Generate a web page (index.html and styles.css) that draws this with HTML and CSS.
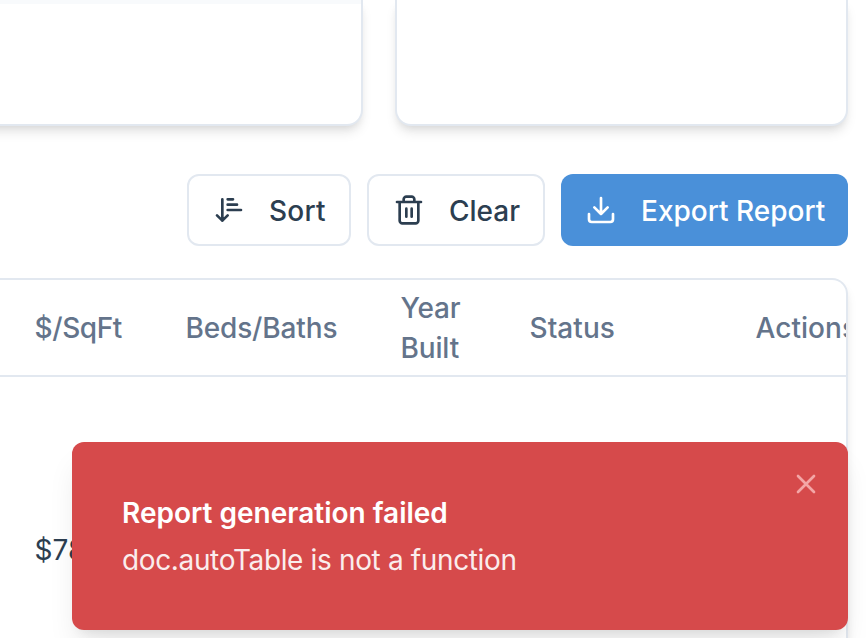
FILE: index.html
```
<!DOCTYPE html>
<html lang="en">
<head>
<meta charset="utf-8">
<title>Report</title>
<link rel="stylesheet" href="styles.css">
</head>
<body>
<main class="page">
  <section class="cards">
    <div class="card card-left"><div class="card-band"></div></div>
    <div class="card card-right"></div>
  </section>
  <div class="toolbar">
    <button class="btn sort">
      <svg class="icon" viewBox="0 0 24 24"><path d="m3 16 4 4 4-4M7 20V4M11 4h4M11 8h7M11 12h10"/></svg>
      <span>Sort</span>
    </button>
    <button class="btn clear">
      <svg class="icon" viewBox="0 0 24 24"><path d="M3 6h18M19 6v14c0 1-1 2-2 2H7c-1 0-2-1-2-2V6M8 6V4c0-1 1-2 2-2h4c1 0 2 1 2 2v2M10 11v6M14 11v6"/></svg>
      <span>Clear</span>
    </button>
    <button class="btn primary">
      <svg class="icon" viewBox="0 0 24 24"><path d="M21 15v4a2 2 0 0 1-2 2H5a2 2 0 0 1-2-2v-4M7 10l5 5 5-5M12 15V3"/></svg>
      <span>Export Report</span>
    </button>
  </div>
  <section class="table">
    <div class="row head">
      <div class="cell price">$/SqFt</div>
      <div class="cell">Beds/Baths</div>
      <div class="cell">Year<br>Built</div>
      <div class="cell status">Status</div>
      <div class="cell status">Actions</div>
    </div>
    <div class="row body-row">
      <div class="cell">$78</div>
    </div>
  </section>
</main>
<div class="toast" role="alert">
  <div class="toast-text">
    <div class="toast-title">Report generation failed</div>
    <div class="toast-message">doc.autoTable is not a function</div>
  </div>
  <svg class="icon close" viewBox="0 0 24 24"><path d="M18 6 6 18M6 6l12 12"/></svg>
</div>
</body>
</html>
```
FILE: styles.css
```
* { box-sizing: border-box; }
body {
  margin: 0;
  height: 638px;
  overflow: hidden;
  background: #fff;
  color: #2c3e50;
  font: 400 28px/40px Inter, "Liberation Sans", sans-serif;
}
.page { width: 848px; }
.cards {
  display: grid;
  grid-template-columns: 403px 453px;
  gap: 32px;
  height: 126px;
  margin-left: -40px;
}
.card {
  border: 2px solid #e2e8f0;
  border-top: 0;
  border-radius: 0 0 16px 16px;
  background: #fff;
  box-shadow: 0 8px 12px -2px rgba(0, 0, 0, .1), 0 4px 8px -4px rgba(0, 0, 0, .1);
}
.card-band { height: 4px; background: #f8fafc; }
.toolbar {
  display: flex;
  justify-content: flex-end;
  gap: 16px;
  margin-top: 48px;
}
.btn {
  display: flex;
  align-items: center;
  gap: 24px;
  height: 72px;
  padding: 0 24px;
  border: 2px solid #e2e8f0;
  border-radius: 12px;
  background: #fff;
  color: #2c3e50;
  font: inherit;
  font-weight: 470;
  white-space: nowrap;
}
.btn span { padding-top: 1px; }
.sort { width: 164px; letter-spacing: .2px; }
.clear { width: 178px; }
.primary {
  width: 287px;
  border: 0;
  background: #4a90d9;
  color: #fff;
}
.icon {
  flex: none;
  width: 32px;
  height: 32px;
  fill: none;
  stroke: currentColor;
  stroke-width: 2;
  stroke-linecap: round;
  stroke-linejoin: round;
}
.table {
  height: 380px;
  margin-top: 32px;
  border: 2px solid #e2e8f0;
  border-left: 0;
  border-radius: 0 16px 0 0;
  overflow: hidden;
  box-shadow: 0 8px 12px -2px rgba(0, 0, 0, .1), 0 4px 8px -4px rgba(0, 0, 0, .1);
}
.row {
  display: grid;
  grid-template-columns: 151px 215px 129px 226px 140px;
  align-items: center;
  padding-left: 34.5px;
}
.head {
  height: 97px;
  padding-top: 1px;
  border-bottom: 2px solid #e2e8f0;
  color: #64748b;
  font-weight: 480;
  letter-spacing: -.15px;
}
.price { letter-spacing: -.4px; }
.status { letter-spacing: .05px; }
.body-row { height: 346px; }
.toast {
  position: absolute;
  top: 442px;
  left: 72px;
  display: flex;
  justify-content: space-between;
  width: 776px;
  height: 188px;
  padding: 50px 26px 48px 50px;
  border-radius: 12px;
  background: #d64a4b;
  color: #fff;
  box-shadow: 0 20px 30px -6px rgba(0, 0, 0, .1), 0 8px 12px -8px rgba(0, 0, 0, .1);
}
.toast-title { padding-top: 1px; font-weight: 600; }
.toast-message { margin-top: 7px; letter-spacing: -.36px; opacity: .9; }
.close { margin-top: -24px; color: #f3a6a6; }
```
